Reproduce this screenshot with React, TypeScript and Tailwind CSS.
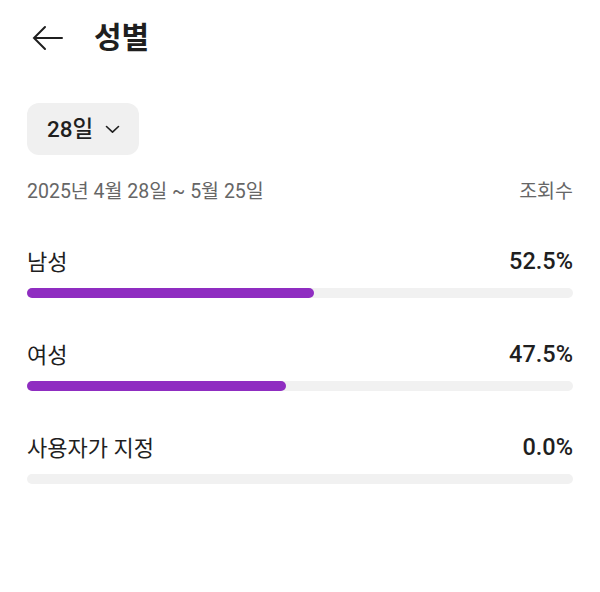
const rows = [
  { label: "남성", value: 52.5 },
  { label: "여성", value: 47.5 },
  { label: "사용자가 지정", value: 0.0 },
];

export default function App() {
  return (
    <div
      className="h-[592px] w-[600px] bg-white text-[#1f1f1f]"
      style={{ fontFamily: "Roboto, 'Noto Sans CJK KR', sans-serif" }}
    >
      <header className="flex h-[76px] items-center pl-[31px]">
        <svg width="34" height="28" viewBox="0 0 34 28" fill="none" stroke="#1f1f1f" strokeWidth="2" strokeLinecap="round">
          <path d="M3 14h28M14 3 3 14l11 11" />
        </svg>
        <h1 className="ml-[29px] text-[30px] font-bold leading-none">성별</h1>
      </header>

      <div className="px-[27px]">
        <button className="mt-[27px] flex h-[52px] w-[112px] items-center rounded-[12px] bg-[#f0f0f0] pl-[20px]">
          <span className="text-[22.5px] font-medium leading-none">28일</span>
          <svg className="ml-[12px]" width="15" height="9" viewBox="0 0 15 9" fill="none" stroke="#1f1f1f" strokeWidth="1.6" strokeLinecap="round" strokeLinejoin="round">
            <path d="M1.5 1.5 7.5 7.2 13.5 1.5" />
          </svg>
        </button>

        <div className="mt-[25px] flex items-center justify-between text-[19.5px] leading-[24px] text-[#666]">
          <span>2025년 4월 28일 ~ 5월 25일</span>
          <span>조회수</span>
        </div>

        <div className="mt-[44px] flex flex-col gap-[43px]">
          {rows.map((r) => (
            <div key={r.label}>
              <div className="flex h-[28px] items-center justify-between">
                <span className="text-[22px]">{r.label}</span>
                <span className="text-[23.5px] font-medium">{r.value.toFixed(1)}%</span>
              </div>
              <div className="mt-[12px] h-[10px] w-full rounded-full bg-[#f1f1f1]">
                <div className="h-full rounded-full bg-[#8f2dc1]" style={{ width: `${r.value}%` }} />
              </div>
            </div>
          ))}
        </div>
      </div>
    </div>
  );
}
